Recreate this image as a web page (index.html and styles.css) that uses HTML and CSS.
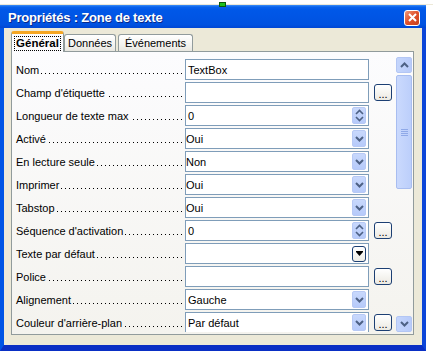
FILE: index.html
```html
<!DOCTYPE html>
<html lang="fr">
<head>
  <meta charset="UTF-8" />
  <title>Propriétés : Zone de texte</title>
  <link rel="stylesheet" href="styles.css">
</head>
<body>
<div class="strip"><span class="marker"></span></div>
<div class="window">
  <div class="titlebar">
    <span class="title">Propriétés : Zone de texte</span>
    <span class="close"><svg width="9" height="9" viewBox="0 0 9 9"><path d="M1 1 L8 8 M8 1 L1 8" stroke="#fff" stroke-width="2"/></svg></span>
  </div>
  <div class="client">
    <div class="tabs">
      <div class="tab active"><span class="focus">Général</span></div>
      <div class="tab t2">Données</div>
      <div class="tab t3">Événements</div>
    </div>
    <div class="page">
      <div class="rows">
        <div class="row"><div class="label"><span>Nom</span><span class="dots"></span></div>
          <div class="field"><span class="val">TextBox</span></div></div>
        <div class="row"><div class="label"><span>Champ d'étiquette</span><span class="dots"></span></div>
          <div class="field"><span class="val"></span></div><div class="more">...</div></div>
        <div class="row"><div class="label"><span>Longueur de texte max</span><span class="dots"></span></div>
          <div class="field"><span class="val">0</span><span class="btn spin"><svg width="9" height="13" viewBox="0 0 9 13"><path d="M1 5 L4.5 1.5 L8 5 M1 8 L4.5 11.5 L8 8" fill="none" stroke="#4d6185" stroke-width="1.6"/></svg></span></div></div>
        <div class="row"><div class="label"><span>Activé</span><span class="dots"></span></div>
          <div class="field"><span class="val v0">Oui</span><span class="btn"><svg width="9" height="6" viewBox="0 0 9 6"><path d="M1 1 L4.5 4.5 L8 1" fill="none" stroke="#4d6185" stroke-width="2"/></svg></span></div></div>
        <div class="row"><div class="label"><span>En lecture seule</span><span class="dots"></span></div>
          <div class="field"><span class="val v0">Non</span><span class="btn"><svg width="9" height="6" viewBox="0 0 9 6"><path d="M1 1 L4.5 4.5 L8 1" fill="none" stroke="#4d6185" stroke-width="2"/></svg></span></div></div>
        <div class="row"><div class="label"><span>Imprimer</span><span class="dots"></span></div>
          <div class="field"><span class="val v0">Oui</span><span class="btn"><svg width="9" height="6" viewBox="0 0 9 6"><path d="M1 1 L4.5 4.5 L8 1" fill="none" stroke="#4d6185" stroke-width="2"/></svg></span></div></div>
        <div class="row"><div class="label"><span>Tabstop</span><span class="dots"></span></div>
          <div class="field"><span class="val v0">Oui</span><span class="btn"><svg width="9" height="6" viewBox="0 0 9 6"><path d="M1 1 L4.5 4.5 L8 1" fill="none" stroke="#4d6185" stroke-width="2"/></svg></span></div></div>
        <div class="row"><div class="label"><span>Séquence d'activation</span><span class="dots"></span></div>
          <div class="field"><span class="val">0</span><span class="btn spin"><svg width="9" height="13" viewBox="0 0 9 13"><path d="M1 5 L4.5 1.5 L8 5 M1 8 L4.5 11.5 L8 8" fill="none" stroke="#4d6185" stroke-width="1.6"/></svg></span></div><div class="more">...</div></div>
        <div class="row"><div class="label"><span>Texte par défaut</span><span class="dots"></span></div>
          <div class="field"><span class="val"></span><span class="btn classic"><svg width="7" height="6" viewBox="0 0 7 6"><path d="M0 0 H7 V1 L3.5 5 L0 1 Z" fill="#000"/></svg></span></div></div>
        <div class="row"><div class="label"><span>Police</span><span class="dots"></span></div>
          <div class="field"><span class="val"></span></div><div class="more">...</div></div>
        <div class="row"><div class="label"><span>Alignement</span><span class="dots"></span></div>
          <div class="field"><span class="val">Gauche</span><span class="btn"><svg width="9" height="6" viewBox="0 0 9 6"><path d="M1 1 L4.5 4.5 L8 1" fill="none" stroke="#4d6185" stroke-width="2"/></svg></span></div></div>
        <div class="row"><div class="label"><span>Couleur d'arrière-plan</span><span class="dots"></span></div>
          <div class="field"><span class="val">Par défaut</span><span class="btn"><svg width="9" height="6" viewBox="0 0 9 6"><path d="M1 1 L4.5 4.5 L8 1" fill="none" stroke="#4d6185" stroke-width="2"/></svg></span></div><div class="more">...</div></div>
      </div>
      <div class="scrollbar">
        <div class="arrow"><svg width="9" height="6" viewBox="0 0 9 6"><path d="M1 5 L4.5 1.5 L8 5" fill="none" stroke="#4d6185" stroke-width="2"/></svg></div>
        <div class="thumb"><svg width="7" height="7" viewBox="0 0 7 7"><path d="M0 0.5 H7 M0 2.5 H7 M0 4.5 H7 M0 6.5 H7" stroke="#8fa9e8" stroke-width="1"/></svg></div>
        <div class="track"></div>
        <div class="arrow"><svg width="9" height="6" viewBox="0 0 9 6"><path d="M1 1 L4.5 4.5 L8 1" fill="none" stroke="#4d6185" stroke-width="2"/></svg></div>
      </div>
    </div>
  </div>
</div>
</body>
</html>
```

FILE: styles.css
```css
body { margin: 0; background: #fff; font-family: "Liberation Sans", Arial, sans-serif; font-size: 11px; color: #000; }
.strip { height: 4px; border-bottom: 1px solid #ede9d9; position: relative; }
.marker { position: absolute; left: 219px; top: 2px; width: 5px; height: 3px; background: #1fc01f; border: 1px solid #0a5a0a; }
.window { width: 418px; height: 340px; border: 4px solid #0055e5; border-top: 0; border-bottom: 6px solid #0a2fc4; border-right-color: #0c45d8; display: flex; flex-direction: column; }
.titlebar { height: 23px; margin: 0 -4px; padding: 0 6px 0 8px; display: flex; align-items: center; justify-content: space-between; background: linear-gradient(#3d8ef5 0, #0a62ec 2px, #0058e8 5px, #0055e5 50%, #0052e0 85%, #0047d4 100%); }
.title { color: #fff; font-weight: bold; font-size: 13px; letter-spacing: -0.2px; margin-top: 1px; text-shadow: 1px 1px 0 #0a2a8a; }
.close { width: 14px; height: 14px; border: 1px solid #fff; border-radius: 3px; background: linear-gradient(135deg, #f09a7a, #e0502a 50%, #c8401e); display: flex; align-items: center; justify-content: center; margin-top: 2px; }
.client { flex: 1; background: #ece9d8; padding: 3px 8px 0 7px; }
.tabs { display: flex; align-items: flex-end; height: 20px; position: relative; z-index: 1; }
.tab { height: 17px; box-sizing: border-box; border: 1px solid #919b9c; border-bottom: 0; border-radius: 3px 3px 0 0; background: linear-gradient(#fff, #f3f3ef 60%, #e8e7e0); display: flex; align-items: center; justify-content: center; }
.tab.active { width: 53px; height: 21px; margin-bottom: -1px; border-top: 3px solid #f5a623; background: #fcfcfe; }
.t2 { width: 52px; }
.t3 { width: 75px; margin-left: 2px; }
.focus { font-weight: bold; font-size: 11.5px; border: 1px dotted #000; padding: 0 1px; line-height: 13px; }
.page { height: 282px; border: 1px solid #919b9c; background: linear-gradient(#fcfcfe, #f4f3ee); display: flex; padding-right: 1px; }
.rows { width: 380px; height: 273px; padding: 7px 0 0 4px; overflow: hidden; }
.row { display: flex; align-items: center; height: 21px; margin-bottom: 2px; }
.label { width: 166px; margin-right: 3px; display: flex; align-items: baseline; white-space: nowrap; }
.dots { flex: 1; height: 1px; margin-left: 2px; background: repeating-linear-gradient(to left, #000 0 1px, transparent 1px 4px); }
.field { width: 184px; height: 21px; box-sizing: border-box; border: 1px solid #7f9db9; background: #fff; display: flex; align-items: center; padding: 1px 2px 1px 2px; }
.val { flex: 1; }
.v0 { margin-left: -2px; }
.btn { width: 14px; height: 17px; box-sizing: border-box; border: 1px solid #b7c9f5; border-radius: 2px; background: linear-gradient(#c8d8fc, #b6cafa); display: flex; align-items: center; justify-content: center; }
.btn.classic { width: 14px; height: 16px; background: linear-gradient(#fff, #eeede6); border-color: #1c3f73; border-radius: 3px; }
.more { width: 18px; height: 17px; box-sizing: border-box; margin-left: 5px; border: 1px solid #1c3f73; border-radius: 3px; background: linear-gradient(#fff, #eceae2); display: flex; align-items: flex-end; justify-content: center; line-height: 12px; }
.scrollbar { width: 16px; margin: 5px 0 2px 0; display: flex; flex-direction: column; }
.arrow { height: 16px; box-sizing: border-box; border: 1px solid #b3c6f4; border-radius: 2px; background: linear-gradient(90deg, #c4d5fc, #b8cbfa); display: flex; align-items: center; justify-content: center; }
.thumb { height: 114px; margin-top: 2px; box-sizing: border-box; border: 1px solid #a8bdf0; border-radius: 2px; background: linear-gradient(90deg, #cad9fd, #bccffb); display: flex; align-items: center; justify-content: center; }
.track { flex: 1; }
```
